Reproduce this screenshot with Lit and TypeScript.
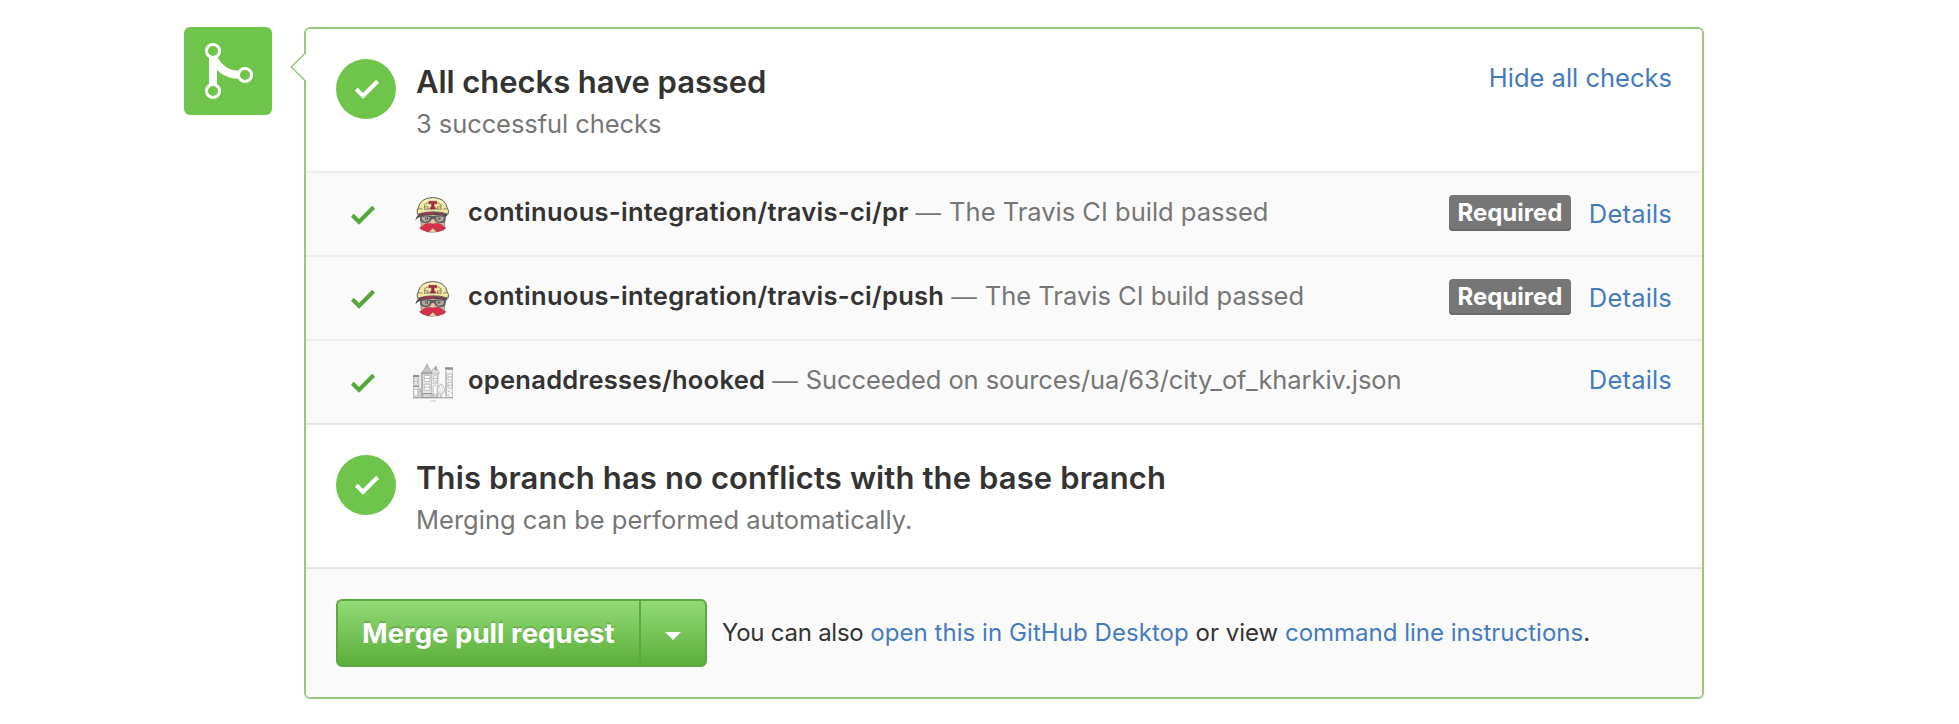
import { LitElement, html, css, nothing } from "lit";
import { customElement, property } from "lit/decorators.js";

const check = (cls: string) => html`
  <svg class=${cls} viewBox="0 .6 12 9.5" width="24" height="19" aria-hidden="true">
    <path d="M.5 5.95 1.4 5.05 4 7.65 10.6 1.05 11.5 1.95 4 9.45z" fill="currentColor" stroke="currentColor" stroke-width=".8" stroke-linejoin="round" />
  </svg>`;

const travis = html`
  <svg class="avatar" viewBox="0 0 40 40" width="40" height="40" aria-hidden="true">
    <path d="M7.5 20 8.2 32Q10 36.5 14 37.6Q19 38.8 24 37.6Q30 36.5 31.3 32L32.5 20z" fill="#d9b59a" stroke="#55524f" stroke-width=".6" />
    <path d="M4.7 20.4Q3.4 16.5 5.1 14.2Q7 4 19.8 3.5Q32.6 4 34.3 14.2Q36.3 16 35.1 20.2Q28 17.6 19.8 17.8Q12 17.8 4.7 20.4z" fill="#f3e7a4" stroke="#4e5154" stroke-width=".9" />
    <path d="M10 8.4Q19.8 2.4 29.8 8.4" fill="none" stroke="#fbf4cd" stroke-width="1.3" />
    <path d="M5 15.2Q7.5 14 9.5 15.3M34.5 15.2Q32 14 30 15.3M11.6 15V10.8L15 8.6M28 15V10.8L24.7 8.6M11.6 12.8H15V15.8M28 12.8H24.6V15.8M11.2 15.4Q20 13.6 28.6 15.4" fill="none" stroke="#77725c" stroke-width=".8" />
    <path d="M15.8 7.2H23.8V10H22.4V9.2H21.2V13.3H22.3V15.2H17.3V13.3H18.4V9.2H17.2V10H15.8z" fill="#a9283c" stroke="#693039" stroke-width=".35" />
    <path d="M2.3 26.4Q3.2 22.4 6.2 20.1Q19 15.8 34.6 20.5L33.8 22.3Q20 19.2 7.4 22.4Q4 24 2.3 26.4z" fill="#4c4448" />
    <path d="M5 22.2Q7 20.2 9.5 19.7L8.2 21.4zM10.5 19.3Q14 18 21.6 18.6L20.6 20.3Q14 19.7 9.6 21.1zM24.5 18.9 30.8 20 29.8 20.8 24.3 20.1z" fill="#c4304b" />
    <path d="M6.7 21.6Q13 20.5 19.8 22Q26 20.5 33 21.7L32.3 26.4Q31.3 29.2 27 29Q22.6 29 21.4 25.6L19.8 24.7 18.4 25.6Q17.2 29 12.6 29Q8.2 29.1 7.2 26z" fill="#555f63" />
    <path d="M8.7 23.1Q13 22 17 23.2L16 26.2Q14.6 27.9 11.2 27.6Q8.6 26.6 8.7 23.1zM22.7 23.2Q27 22 31 23.1L30.3 26.2Q28.7 27.9 25 27.6Q22.9 26.5 22.7 23.2z" fill="#bba899" />
    <path d="M12.2 23.4h2.8v2h-2.8zM24.6 23.4h2.8v2h-2.8z" fill="#414143" />
    <path d="M13 23.7h1v.8h-1zM25.3 23.7h1v.8h-1z" fill="#f5f2ea" />
    <path d="M18.7 25.8H21L22 30H17.6z" fill="#e6c4a4" />
    <path d="M6.4 33.6Q9.4 33.2 10.6 30.9Q14 28.2 19.8 30Q25.6 28.2 29 30.9Q30.2 33.2 33 33.5Q31.4 36.6 27 36.9L24.5 38Q22.4 36.2 19.8 34.2Q17.2 36.2 15 38L12.6 36.9Q8.2 36.6 6.4 33.6z" fill="#d3324a" stroke="#a02a3e" stroke-width=".4" />
    <path d="M19.8 34.6 22.6 37.6Q19.8 38.6 17 37.6z" fill="#e8cba8" />
  </svg>`;

const houses = html`
  <svg class="avatar" viewBox="0 0 40 40" width="40" height="40" aria-hidden="true">
    <g fill="#f2f2f2" stroke="#a9a9a9" stroke-width=".7">
      <path d="M.3 14.5H5.8V35.6H.3z" />
      <path d="M8.2 11H25V35.6H8.2z" />
      <path d="M32.8 7.5H39.8V35.6H32.8z" />
      <path d="M18 10.6 20.5 6.2H23.6L26.2 10.6V12H18z" fill="#dedede" />
      <path d="M8.6 11 14 2.6 19.2 11z" fill="#c4c4c4" />
      <path d="M9.5 12H18.6V35.4H9.5z" fill="#e7e7e7" />
      <g fill="#fff">
        <path d="M11.3 13.5H17V19.4H11.3zM11.3 22.2H17V28.3H11.3zM20.3 13.8H24.2V19H20.3zM20.2 35.2V25Q22 21.2 24.2 25V35.2zM1.2 17H4.5V22H1.2zM1 27H4.6V34H1zM35 12H39V18H35zM35 20.5H39V26H35z" />
      </g>
    </g>
    <path d="M0 13H6.2V15.2H0zM32 5.2H40V7.6H32zM8.4 10.4H19V11.6H8.4zM22 4.3h1.5v4h-1.5zM9.4 31H18.6V32.2H9.4zM0 23.6H6V25H0zM13.7 1.8h.7v3h-.7z" fill="#929292" />
    <path d="M11.3 16.4H17M11.3 25.2H17M20.3 16.4H24.2M1.2 19.4H4.5M35 15H39M35 23.2H39M33.2 10V34M8.9 12V35M7.2 26V35M5.7 27 8 30M19.2 21H25M19.2 32.2H24.4M19 33.8H25.2M35 29.4h1.4M38 31.2h1.4M34.6 33h1.4" fill="none" stroke="#9f9f9f" stroke-width=".7" />
    <path d="M10.5 32.8V35M12.6 32.8V35M14.7 32.8V35M16.8 32.8V35" stroke="#b5b5b5" stroke-width=".7" />
    <path d="M27.2 35V31.6Q24 31.4 24.3 28.2Q24 26.4 25.6 25.4Q26 22.2 28.2 22.2Q30.4 22.4 30.6 25.4Q32.2 26.6 31.4 29Q31.4 31.4 28.6 31.6V35z" fill="#ededed" stroke="#ababab" stroke-width=".7" />
    <path d="M0 35.8H40" stroke="#8f8f8f" stroke-width=".9" />
    <path d="M17.3 39H22.8" stroke="#b9b9b9" stroke-width="1" stroke-dasharray="1.4 .5" />
  </svg>`;

@customElement("status-heading")
class StatusHeading extends LitElement {
  @property() heading = "";
  @property() detail = "";
  @property() action = "";
  @property({ type: Boolean }) tight = false;

  static styles = css`
    :host { display: flex; box-sizing: border-box; height: 142px; padding: 30px 30px 0; background: #fff; }
    .badge { box-sizing: border-box; width: 60px; height: 60px; flex: none; padding-left: 2px; border-radius: 50%; background: #6fc54c; color: #fff; display: flex; align-items: center; justify-content: center; }
    .badge svg { display: block; }
    .text { flex: 1; padding: 4px 0 0 20px; line-height: 38px; }
    .title { font-size: 31px; font-weight: 600; color: #333; letter-spacing: 0.12px; white-space: nowrap; }
    .tight { letter-spacing: -0.06px; }
    .sub { margin-top: 4px; font-size: 25.5px; color: #767676; letter-spacing: 0; white-space: nowrap; }
    .tight + .sub { letter-spacing: -0.08px; }
    .toggle { font-size: 25.5px; line-height: 38px; color: #447ac0; text-decoration: none; }
  `;

  render() {
    return html`
      <div class="badge">${check("tick")}</div>
      <div class="text">
        <div class="title ${this.tight ? "tight" : ""}">${this.heading}</div>
        <div class="sub">${this.detail}</div>
      </div>
      ${this.action ? html`<a class="toggle">${this.action}</a>` : nothing}
    `;
  }
}

interface Check {
  name: string;
  message: string;
  required: boolean;
  source: "travis" | "houses";
}

@customElement("check-row")
class CheckRow extends LitElement {
  @property({ attribute: false }) check!: Check;

  static styles = css`
    :host { display: flex; box-sizing: border-box; height: 84px; padding: 0 30px 0 45px; border-top: 2px solid #eee; background: #fafafa; font-size: 25.5px; white-space: nowrap; }
    .tick { display: block; flex: none; margin-top: 33px; color: #57a639; }
    .avatar { display: block; flex: none; margin: 21px 15px 0 38px; }
    .text { flex: 1; line-height: 78px; color: #767676; }
    .name { font-weight: 600; color: #333; letter-spacing: 0.28px; }
    .dash { margin: 0 8px 0 7px; font-family: "Liberation Sans", sans-serif; line-height: 1; }
    .long { letter-spacing: -0.09px; }
    .required { height: 36px; box-sizing: border-box; margin: 22px 18px 0 0; padding: 0 8.5px; border-radius: 4px; background: #767676; box-shadow: inset 0 -2px 0 #6a6a6a; color: #fff; font-size: 24px; font-weight: 700; line-height: 35px; }
    .details { line-height: 81px; color: #447ac0; text-decoration: none; letter-spacing: 0.18px; }
    .plain { line-height: 78px; }
  `;

  render() {
    const c = this.check;
    return html`
      ${check("tick")}
      ${c.source === "travis" ? travis : houses}
      <div class="text"><span class="name">${c.name}</span><span class="dash">—</span><span class=${c.required ? "short" : "long"}>${c.message}</span></div>
      ${c.required ? html`<span class="required">Required</span>` : nothing}
      <a class="details ${c.required ? "" : "plain"}">Details</a>
    `;
  }
}

@customElement("app-root")
class AppRoot extends LitElement {
  private checks: Check[] = [
    { name: "continuous-integration/travis-ci/pr", message: "The Travis CI build passed", required: true, source: "travis" },
    { name: "continuous-integration/travis-ci/push", message: "The Travis CI build passed", required: true, source: "travis" },
    { name: "openaddresses/hooked", message: "Succeeded on sources/ua/63/city_of_kharkiv.json", required: false, source: "houses" },
  ];

  static styles = css`
    :host { display: flex; align-items: flex-start; box-sizing: border-box; height: 724px; padding: 27px 0 0 184px; background: #fff; font-family: Inter, "Liberation Sans", sans-serif; color: #333; }
    .branch { display: block; flex: none; margin-right: 32px; border-radius: 6px; background: #6fc54c; }
    .panel { position: relative; box-sizing: border-box; width: 1400px; height: 672px; border: 2px solid #95c97e; border-radius: 6px; }
    .arrow { position: absolute; left: -16px; top: 22px; display: block; }
    .head { border-radius: 4px 4px 0 0; }
    .line { border-top: 2px solid #e5e5e5; }
    .footer { display: flex; box-sizing: border-box; height: 130px; padding: 30px 30px 0; border-top: 2px solid #e5e5e5; background: #fafafa; border-radius: 0 0 4px 4px; }
    .buttons { display: flex; box-sizing: border-box; width: 371px; height: 68px; border: 2px solid #5ca941; border-radius: 6px; background: linear-gradient(#93dc77, #5aad39) border-box; }
    .merge { box-sizing: border-box; width: 301px; padding-left: 24px; color: #fff; font-size: 27.5px; font-weight: 700; line-height: 64px; letter-spacing: 0.04px; text-shadow: 0 -2px 0 rgba(0, 0, 0, 0.15); white-space: nowrap; }
    .menu { flex: 1; display: flex; align-items: center; justify-content: center; border-left: 2px solid #5ca941; }
    .caret { display: block; margin-top: 5px; }
    .help { margin-left: 15px; font-size: 24px; line-height: 68px; white-space: nowrap; letter-spacing: 0; }
    .help a { color: #447ac0; text-decoration: none; }
    .help .desktop { letter-spacing: 0.06px; }
    .lead { letter-spacing: -0.25px; }
  `;

  render() {
    return html`
      <svg class="branch" viewBox="0 0 88 88" width="88" height="88" aria-hidden="true">
        <path d="M25 27H33V61H25z" fill="#fff" />
        <path d="M32 27C37 38 44 43.8 56 43.8V51.8C46 51.8 38 48.5 32 42z" fill="#fff" />
        <g fill="#6fc54c" stroke="#fff" stroke-width="3">
          <circle cx="29" cy="24" r="6.5" />
          <circle cx="61" cy="48" r="6.5" />
          <circle cx="29" cy="64" r="6.5" />
        </g>
      </svg>
      <div class="panel">
        <svg class="arrow" viewBox="0 0 17 32" width="17" height="32" aria-hidden="true">
          <path d="M14 2H17V30H14z" fill="#fff" />
          <path d="M16 1.5 1.2 16 16 30.5" fill="#fff" stroke="#95c97e" stroke-width="1.5" />
        </svg>
        <status-heading class="head" tight heading="All checks have passed" detail="3 successful checks" action="Hide all checks"></status-heading>
        ${this.checks.map((c) => html`<check-row .check=${c}></check-row>`)}
        <div class="line">
          <status-heading heading="This branch has no conflicts with the base branch" detail="Merging can be performed automatically."></status-heading>
        </div>
        <div class="footer">
          <div class="buttons">
            <div class="merge">Merge pull request</div>
            <div class="menu">
              <svg class="caret" viewBox="0 0 16 8" width="16" height="8" aria-hidden="true"><path d="M0 0H16L8 8z" fill="#fff" /></svg>
            </div>
          </div>
          <div class="help"><span class="lead">You can also</span> <a class="desktop">open this in GitHub Desktop</a> or view <a>command line instructions</a>.</div>
        </div>
      </div>
    `;
  }
}
